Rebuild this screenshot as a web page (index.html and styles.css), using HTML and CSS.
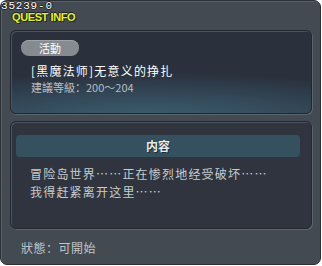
FILE: index.html
```html
<!DOCTYPE html>
<html lang="en">
<head>
    <meta charset="UTF-8">
    <title>Quest Info</title>
    <link rel="stylesheet" href="styles.css">
</head>
<body>
    <div class="window">
        <div class="quest-id">35239-0</div>
        <div class="window-title">QUEST INFO</div>
        <div class="panel panel-top">
            <span class="tag">活動</span>
            <div class="quest-name">[黑魔法师]无意义的挣扎</div>
            <div class="quest-level">建議等級：200～204</div>
        </div>
        <div class="panel panel-body">
            <div class="section-head">内容</div>
            <p class="desc">冒险岛世界……正在惨烈地经受破坏……<br>我得赶紧离开这里……</p>
        </div>
        <div class="status">狀態：可開始</div>
    </div>
</body>
</html>
```

FILE: styles.css
```css
body {
    margin: 0;
    background: #ffffff;
    font-family: "Noto Sans CJK SC", "Liberation Sans", sans-serif;
}
.window {
    position: relative;
    width: 321px;
    height: 265px;
    box-sizing: border-box;
    padding: 29px 8px 0 9px;
    background: #434a52;
    border: 1px solid #2c3137;
    border-radius: 7px;
    box-shadow: inset 1px 1px 0 #5a6169;
}
.quest-id {
    position: absolute;
    left: 0;
    top: 0;
    font-family: "Liberation Mono", monospace;
    font-size: 11px;
    line-height: 10px;
    letter-spacing: 0.8px;
    color: #ffffff;
    text-shadow: 1px 0 0 #222, -1px 0 0 #222, 0 1px 0 #222, 0 -1px 0 #222;
}
.window-title {
    position: absolute;
    left: 11px;
    top: 12px;
    font-family: "Liberation Sans", sans-serif;
    font-weight: bold;
    font-size: 11px;
    line-height: 9px;
    letter-spacing: -0.4px;
    color: #e4f036;
    text-shadow: 1px 1px 0 #1d2118, -1px 0 0 #1d2118, 0 -1px 0 #1d2118;
}
.panel {
    border: 1px solid #22272e;
    border-radius: 6px;
    box-shadow: inset 1px 1px 0 #4c545d, 1px 1px 0 #5c646c;
}
.panel-top {
    height: 84px;
    box-sizing: border-box;
    padding: 9px 10px 0 10px;
    background: radial-gradient(ellipse 120% 70% at 45% 110%, #3d6170 0%, #33495a 45%, #2a313c 85%);
}
.tag {
    display: block;
    width: 58px;
    height: 16px;
    line-height: 16px;
    text-align: center;
    font-size: 11px;
    color: #ffffff;
    background: #858b90;
    border-radius: 8px;
    box-shadow: inset 0 1px 0 #a0a5a9;
}
.quest-name {
    margin: 6px 0 0 10px;
    font-size: 12px;
    line-height: 17px;
    letter-spacing: 1.2px;
    color: #ffffff;
}
.quest-level {
    margin-left: 10px;
    font-size: 11px;
    line-height: 16px;
    color: #b8bec4;
}
.panel-body {
    margin-top: 7px;
    height: 108px;
    box-sizing: border-box;
    padding: 13px 11px 0 5px;
    background: #2f343e;
}
.section-head {
    height: 22px;
    line-height: 22px;
    text-align: center;
    font-size: 12px;
    font-weight: bold;
    color: #e6ebee;
    background: #35505e;
    border-radius: 4px;
    text-shadow: 1px 1px 0 #1e2a31;
}
.desc {
    margin: 8px 0 0 14px;
    font-size: 12px;
    line-height: 18px;
    letter-spacing: 1.2px;
    color: #c8ccd0;
}
.status {
    margin: 10px 0 0 11px;
    font-size: 12px;
    letter-spacing: 0.5px;
    color: #c0c5ca;
}
```
